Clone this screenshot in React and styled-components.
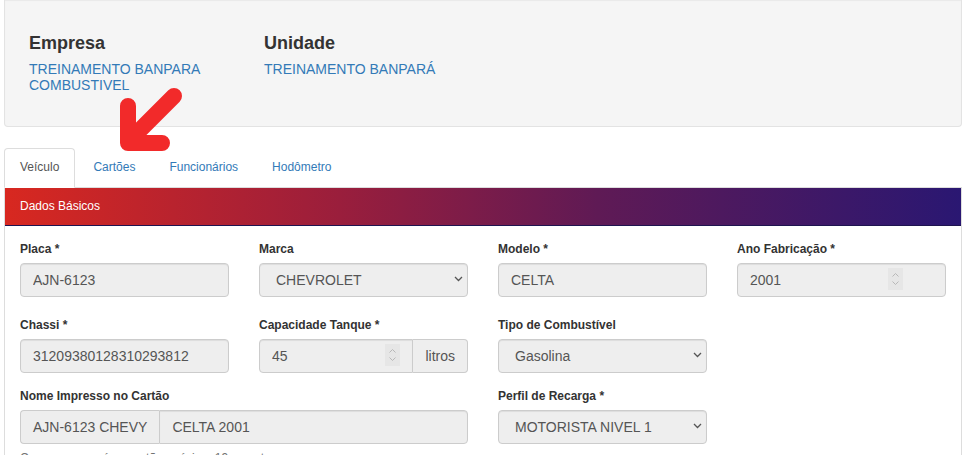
import React from "react";
import styled, { createGlobalStyle } from "styled-components";

const GlobalStyle = createGlobalStyle`
  html, body { margin: 0; padding: 0; background: #fff; overflow: hidden; }
  body {
    font-family: "Liberation Sans", Arial, Helvetica, sans-serif;
    font-size: 14px;
    line-height: 1.42857;
    color: #333;
  }
  * { box-sizing: border-box; }
`;

const Page = styled.div`
  position: relative;
  padding: 0 11px 0 4px;
`;

const Well = styled.section`
  background: #f5f5f5;
  border: 1px solid #e3e3e3;
  border-top: none;
  border-radius: 0 0 4px 4px;
  box-shadow: inset 0 1px 1px rgba(0, 0, 0, 0.05);
  padding: 33px 24px 33px;
`;

const WellGrid = styled.div`
  display: grid;
  grid-template-columns: 235px 235px;
`;

const InfoBlock = styled.div`
  display: flex;
  flex-direction: column;
`;

const InfoTitle = styled.h4`
  margin: 0 0 8px;
  font-size: 18px;
  line-height: 20px;
  font-weight: bold;
  color: #333;
`;

const InfoLink = styled.a`
  font-size: 14px;
  line-height: 16px;
  color: #337ab7;
  text-decoration: none;
`;

const Arrow = styled.svg`
  position: absolute;
  left: 0;
  top: 0;
  pointer-events: none;
`;

const TabList = styled.ul`
  display: flex;
  list-style: none;
  margin: 21px 0 0;
  padding: 0;
  border-bottom: 1px solid #ddd;
`;

const Tab = styled.li`
  margin: 0 2px -1px 0;
  padding: 10px 15px 11px;
  font-size: 12px;
  line-height: 17px;
  border: 1px solid ${(p) => (p.$active ? "#ddd" : "transparent")};
  border-bottom-color: ${(p) => (p.$active ? "#fff" : "transparent")};
  border-radius: 4px 4px 0 0;
  background: ${(p) => (p.$active ? "#fff" : "transparent")};
  color: ${(p) => (p.$active ? "#555" : "#337ab7")};
`;

const Panel = styled.section`
  border: 1px solid #ddd;
  border-top: none;
`;

const PanelHeading = styled.div`
  padding: 10px 15px;
  font-size: 12px;
  line-height: 17px;
  color: #fff;
  background: linear-gradient(to right, #d82820 0%, #9a1e3c 35%, #5f1a55 62%, #2a1772 100%);
  border-bottom: 1px solid #1e1450;
`;

const PanelBody = styled.div`
  padding: 15px 15px 20px;
`;

const FormRow = styled.div`
  display: grid;
  grid-template-columns: repeat(4, 1fr);
  column-gap: 30px;
  margin-bottom: ${(p) => p.$mb}px;
`;

const FormGroup = styled.div`
  grid-column: span ${(p) => p.$span || 1};
  min-width: 0;
`;

const Label = styled.label`
  display: block;
  margin-bottom: 5px;
  font-size: 12px;
  line-height: 17px;
  font-weight: bold;
  color: #333;
`;

const Field = styled.div`
  position: relative;
  display: flex;
  flex: ${(p) => (p.$grow ? 1 : "none")};
  min-width: 0;
`;

const Input = styled.input`
  display: block;
  width: 100%;
  height: 34px;
  padding: 6px ${(p) => p.$pr || 12}px 6px 12px;
  font-family: inherit;
  font-size: 14px;
  line-height: 20px;
  color: #555;
  background: #eee;
  border: 1px solid #ccc;
  border-radius: ${(p) => p.$radius || "4px"};
  box-shadow: inset 0 1px 1px rgba(0, 0, 0, 0.075);
  opacity: 1;
  -webkit-text-fill-color: #555;
`;

const Select = styled.select`
  display: block;
  width: 100%;
  height: 34px;
  padding: 6px 24px 6px 16px;
  font-family: inherit;
  font-size: 14px;
  line-height: 20px;
  color: #555;
  background: #eee;
  border: 1px solid #ccc;
  border-radius: 4px;
  box-shadow: inset 0 1px 1px rgba(0, 0, 0, 0.075);
  appearance: none;
  -webkit-appearance: none;
  opacity: 1;
`;

const Chevron = styled.svg`
  position: absolute;
  right: 5px;
  top: 13px;
  pointer-events: none;
`;

const Spinner = styled.svg`
  position: absolute;
  right: ${(p) => p.$right}px;
  top: 5px;
  pointer-events: none;
`;

const InputGroup = styled.div`
  display: flex;
  width: 100%;
`;

const Addon = styled.span`
  display: block;
  flex: none;
  height: 34px;
  padding: 6px 12px;
  font-size: 14px;
  line-height: 20px;
  color: #555;
  background: #eee;
  border: 1px solid #ccc;
  white-space: nowrap;
  ${(p) =>
    p.$side === "left"
      ? "border-right: 0; border-radius: 4px 0 0 4px;"
      : "border-left: 0; border-radius: 0 4px 4px 0;"}
`;

const HelpText = styled.p`
  margin: 6px 0 0;
  font-size: 12px;
  line-height: 17px;
  color: #737373;
`;

const ChevronIcon = () => (
  <Chevron width="9" height="6" viewBox="0 0 9 6">
    <path d="M1 1l3.5 3.5L8 1" fill="none" stroke="#555" strokeWidth="1.3" />
  </Chevron>
);

const SpinIcon = ({ right }) => (
  <Spinner $right={right} width="15" height="22" viewBox="0 0 15 22">
    <rect x="0" y="0" width="15" height="22" fill="#e6e6e6" />
    <path d="M4.5 8.5l3-3 3 3" fill="none" stroke="#b8b8b8" strokeWidth="1" />
    <path d="M4.5 13.5l3 3 3-3" fill="none" stroke="#b8b8b8" strokeWidth="1" />
  </Spinner>
);

const SelectField = ({ value }) => (
  <Field>
    <Select disabled value={value} onChange={() => {}}>
      <option value={value}>{value}</option>
    </Select>
    <ChevronIcon />
  </Field>
);

export default function App() {
  return (
    <>
      <GlobalStyle />
      <Page>
        <Well>
          <WellGrid>
            <InfoBlock>
              <InfoTitle>Empresa</InfoTitle>
              <InfoLink href="#">TREINAMENTO BANPARA</InfoLink>
              <InfoLink href="#">COMBUSTIVEL</InfoLink>
            </InfoBlock>
            <InfoBlock>
              <InfoTitle>Unidade</InfoTitle>
              <InfoLink href="#">TREINAMENTO BANPARÁ</InfoLink>
            </InfoBlock>
          </WellGrid>
        </Well>

        <TabList>
          <Tab $active>Veículo</Tab>
          <Tab>Cartões</Tab>
          <Tab>Funcionários</Tab>
          <Tab>Hodômetro</Tab>
        </TabList>

        <Panel>
          <PanelHeading>Dados Básicos</PanelHeading>
          <PanelBody>
            <FormRow $mb={20}>
              <FormGroup>
                <Label>Placa *</Label>
                <Input disabled value="AJN-6123" readOnly />
              </FormGroup>
              <FormGroup>
                <Label>Marca</Label>
                <SelectField value="CHEVROLET" />
              </FormGroup>
              <FormGroup>
                <Label>Modelo *</Label>
                <Input disabled value="CELTA" readOnly />
              </FormGroup>
              <FormGroup>
                <Label>Ano Fabricação *</Label>
                <Field>
                  <Input disabled value="2001" readOnly $pr={42} />
                  <SpinIcon right={43} />
                </Field>
              </FormGroup>
            </FormRow>

            <FormRow $mb={15}>
              <FormGroup>
                <Label>Chassi *</Label>
                <Input disabled value="31209380128310293812" readOnly />
              </FormGroup>
              <FormGroup>
                <Label>Capacidade Tanque *</Label>
                <InputGroup>
                  <Field $grow>
                    <Input disabled value="45" readOnly $radius="4px 0 0 4px" />
                    <SpinIcon right={13} />
                  </Field>
                  <Addon $side="right">litros</Addon>
                </InputGroup>
              </FormGroup>
              <FormGroup>
                <Label>Tipo de Combustível</Label>
                <SelectField value="Gasolina" />
              </FormGroup>
              <FormGroup />
            </FormRow>

            <FormRow $mb={0}>
              <FormGroup $span={2}>
                <Label>Nome Impresso no Cartão</Label>
                <InputGroup>
                  <Addon $side="left">AJN-6123 CHEVY</Addon>
                  <Field $grow>
                    <Input disabled value="CELTA 2001" readOnly $radius="0 4px 4px 0" />
                  </Field>
                </InputGroup>
                <HelpText>Como aparecerá no cartão, máximo 19 caracteres</HelpText>
              </FormGroup>
              <FormGroup>
                <Label>Perfil de Recarga *</Label>
                <SelectField value="MOTORISTA NIVEL 1" />
              </FormGroup>
            </FormRow>
          </PanelBody>
        </Panel>

        <Arrow width="200" height="160" viewBox="0 0 200 160">
          <path
            d="M174 96L133 137M128 106L128 143L162 143"
            fill="none"
            stroke="#f22a2a"
            strokeWidth="16"
            strokeLinecap="round"
            strokeLinejoin="round"
          />
        </Arrow>
      </Page>
    </>
  );
}
